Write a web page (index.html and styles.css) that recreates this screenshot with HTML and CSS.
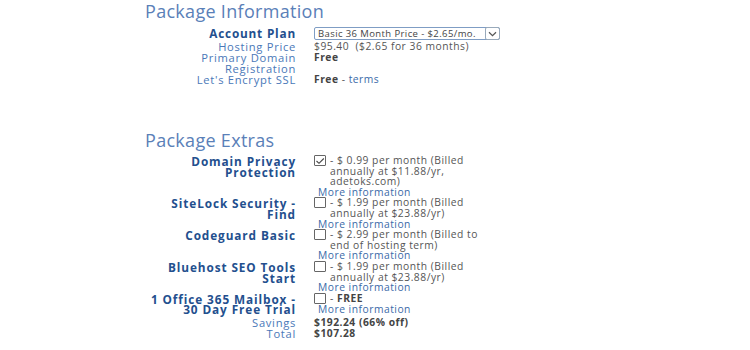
FILE: index.html
```html
<!DOCTYPE html>
<html lang="en">
<head>
    <meta charset="UTF-8">
    <title>Package Information</title>
    <link rel="stylesheet" href="styles.css">
</head>
<body>
    <div class="page">
        <h2 class="section-title">Package Information</h2>
        <div class="form-grid info">
            <div class="label strong">Account Plan</div>
            <div class="value">
                <div class="select">
                    <span class="select-text">Basic 36 Month Price - $2.65/mo.</span>
                    <span class="select-arrow">
                        <svg width="9" height="6" viewBox="0 0 9 6"><path d="M1 1.2 L4.5 4.6 L8 1.2" fill="none" stroke="#555" stroke-width="1.2"/></svg>
                    </span>
                </div>
            </div>

            <div class="label">Hosting Price</div>
            <div class="value">$95.40&nbsp; ($2.65 for 36 months)</div>

            <div class="label">Primary Domain Registration</div>
            <div class="value"><b>Free</b></div>

            <div class="label">Let's Encrypt SSL</div>
            <div class="value"><b>Free</b> - <a href="#">terms</a></div>
        </div>

        <h2 class="section-title extras-title">Package Extras</h2>
        <div class="form-grid extras">
            <div class="label strong">Domain Privacy Protection</div>
            <div class="value">
                <div class="extra-line">
                    <span class="checkbox checked">
                        <svg width="10" height="8" viewBox="0 0 10 8"><path d="M1.5 4 L4 6.3 L8.8 1.5" fill="none" stroke="#444" stroke-width="1.1"/></svg>
                    </span>
                    <span class="extra-text">- $ 0.99 per month (Billed annually at $11.88/yr, adetoks.com)</span>
                </div>
                <a class="more" href="#">More information</a>
            </div>

            <div class="label strong">SiteLock Security - Find</div>
            <div class="value">
                <div class="extra-line">
                    <span class="checkbox"></span>
                    <span class="extra-text">- $ 1.99 per month (Billed annually at $23.88/yr)</span>
                </div>
                <a class="more" href="#">More information</a>
            </div>

            <div class="label strong">Codeguard Basic</div>
            <div class="value">
                <div class="extra-line">
                    <span class="checkbox"></span>
                    <span class="extra-text">- $ 2.99 per month (Billed to end of hosting term)</span>
                </div>
                <a class="more" href="#">More information</a>
            </div>

            <div class="label strong">Bluehost SEO Tools Start</div>
            <div class="value">
                <div class="extra-line">
                    <span class="checkbox"></span>
                    <span class="extra-text">- $ 1.99 per month (Billed annually at $23.88/yr)</span>
                </div>
                <a class="more" href="#">More information</a>
            </div>

            <div class="label strong">1 Office 365 Mailbox - 30 Day Free Trial</div>
            <div class="value">
                <div class="extra-line">
                    <span class="checkbox"></span>
                    <span class="extra-text">- <b>FREE</b></span>
                </div>
                <a class="more" href="#">More information</a>
            </div>

            <div class="label total-label savings">Savings</div>
            <div class="value total-value savings"><b>$192.24 (66% off)</b></div>

            <div class="label total-label">Total</div>
            <div class="value total-value"><b>$107.28</b></div>
        </div>
    </div>
</body>
</html>
```

FILE: styles.css
```css
body {
    margin: 0;
    background-color: #fff;
    font-family: "Open Sans", "DejaVu Sans", sans-serif;
}
.page {
    padding: 0 0 0 145px;
    width: 400px;
}
.section-title {
    margin: 0;
    font-size: 18px;
    font-weight: normal;
    line-height: 22px;
    color: #5a80b8;
    letter-spacing: 0.3px;
}
.extras-title {
    margin-top: 44px;
}
.form-grid {
    display: grid;
    grid-template-columns: 151px 1fr;
    column-gap: 18px;
}
.info {
    margin-top: 4px;
}
.extras {
    margin-top: 4px;
}
.label {
    text-align: right;
    font-size: 11.2px;
    line-height: 11px;
    letter-spacing: 0.7px;
    color: #4a78b8;
}
.label.strong {
    font-weight: bold;
    color: #234f8e;
    font-size: 11.8px;
    letter-spacing: 0.9px;
}
.info .label.strong {
    letter-spacing: 0.8px;
    line-height: 14px;
}
.value {
    font-size: 10.3px;
    line-height: 11px;
    letter-spacing: 0.5px;
    color: #555;
}
.value b {
    color: #444;
}
.value a {
    color: #3a6aa8;
    text-decoration: none;
}
.select {
    display: flex;
    align-items: stretch;
    width: 184px;
    height: 11px;
    border: 1px solid #7f9dc4;
    border-radius: 2px;
    margin-top: 1px;
    margin-bottom: 1px;
}
.select-text {
    flex: 1;
    padding-left: 3px;
    font-size: 9.5px;
    line-height: 11px;
    letter-spacing: 0.4px;
    color: #444;
    white-space: nowrap;
    overflow: hidden;
}
.select-arrow {
    width: 13px;
    border: 1px solid #9ab;
    border-radius: 2px;
    margin: -1px -1px -1px 0;
    display: flex;
    align-items: center;
    justify-content: center;
}
.extras .label.strong {
    line-height: 10.6px;
    padding-top: 1px;
}
.extras .value {
    line-height: 10.6px;
}
.extra-line {
    display: flex;
    align-items: flex-start;
}
.checkbox {
    flex: none;
    width: 10px;
    height: 9px;
    border: 1px solid #666;
    border-radius: 1px;
    margin-right: 4px;
    display: flex;
    align-items: center;
    justify-content: center;
}
.extra-text {
    width: 152px;
}
.more {
    display: block;
    padding-left: 4px;
}
.extras .total-label,
.extras .total-value {
    line-height: 11.5px;
}
.extras .savings {
    margin-top: 2px;
}
```
